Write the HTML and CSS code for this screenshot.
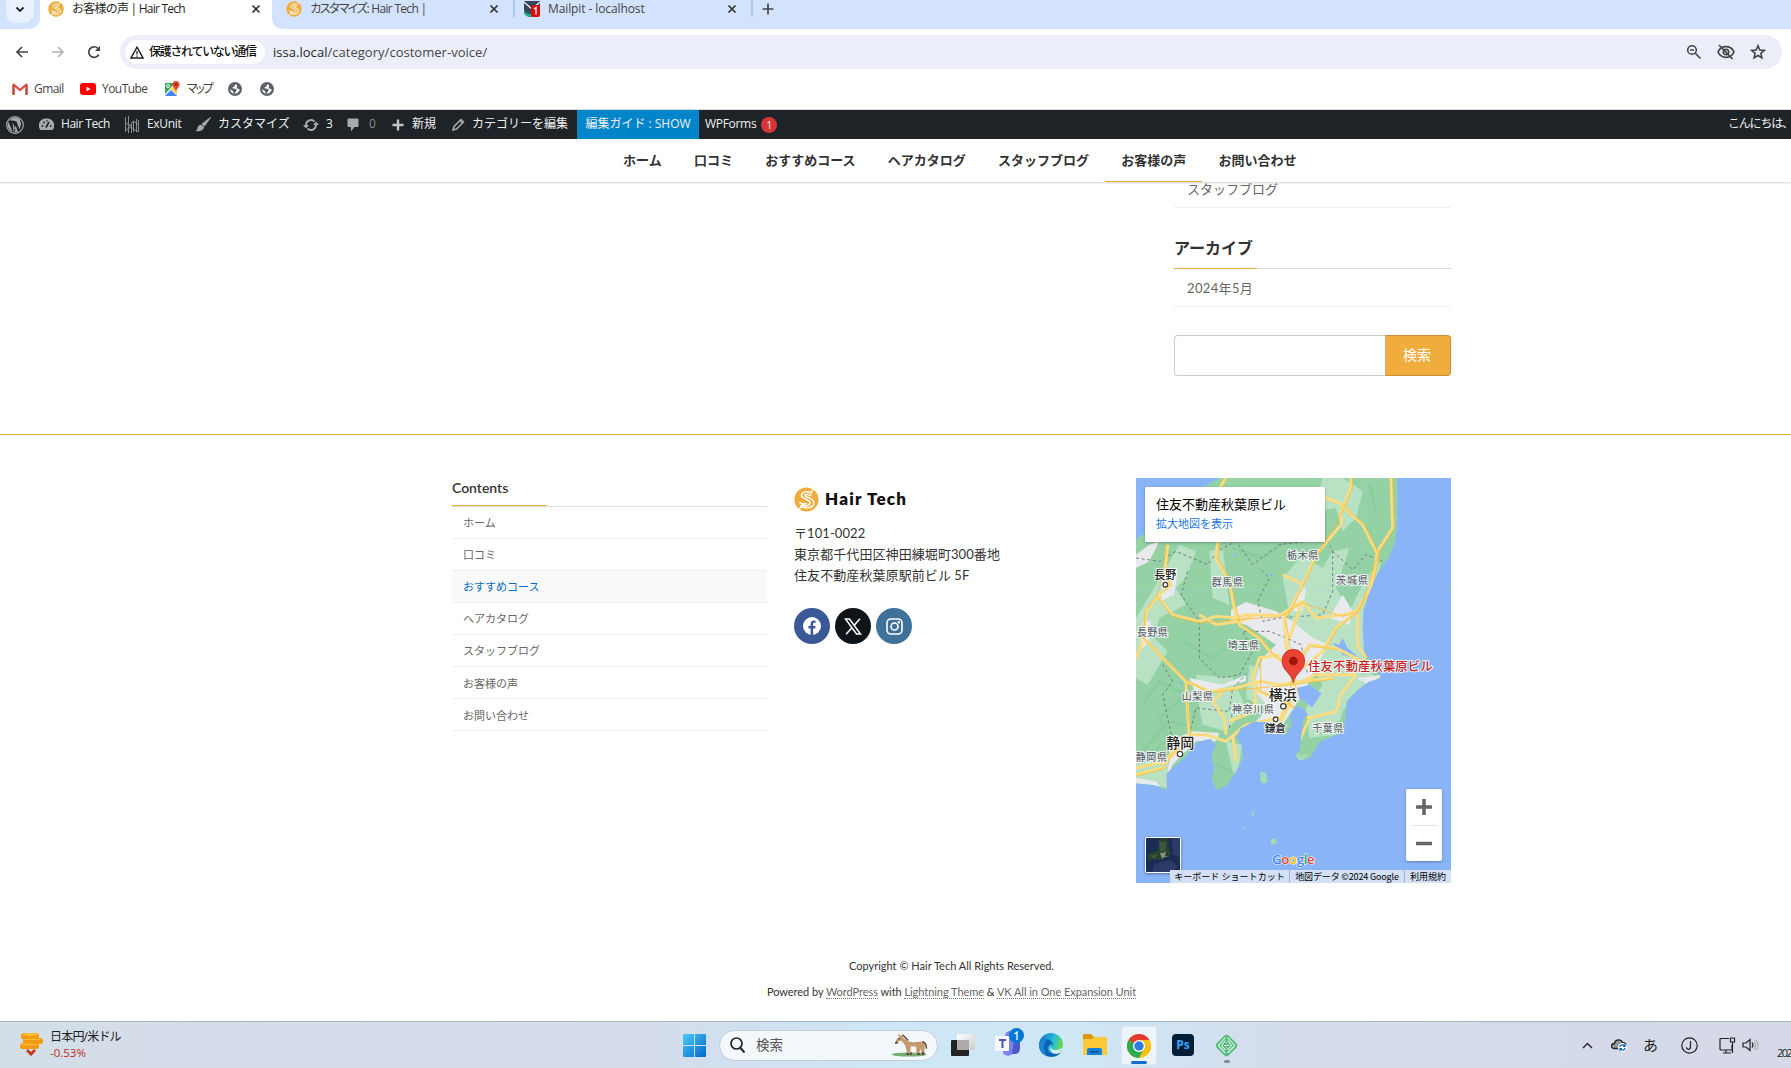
FILE: index.html
```html
<!DOCTYPE html>
<html lang="ja">
<head>
<meta charset="utf-8">
<title>お客様の声 | Hair Tech</title>
<link rel="stylesheet" href="styles.css">
</head>
<body>
<svg width="0" height="0" class="defs" aria-hidden="true">
  <defs>
    <symbol id="brand" viewBox="0 0 26 26"><circle cx="13" cy="13" r="12.6" fill="#f0ad3d"/><path d="M20.5 1.5 17.7 6.2C14 3.7 7.5 4.8 7.8 9.2c.3 3 9 3.700 9 7.300 0 3.200-5 4-8.500 1.500L5 24.500M18 9.500c-1.500-2-6.500-2.200-6.600-.5-.1 1.800 9.200 2.200 9.200 7.400 0 5.500-8 6.500-12.600 3.800M5.500 15.500c1.500 2.300 7 3 7.200 1" fill="none" stroke="#fff" stroke-width="1.5"/></symbol>
    <symbol id="close" viewBox="0 0 10 10"><path d="M1.500 1.500l7 7m0-7l-7 7" stroke="#333" stroke-width="1.700"/></symbol>
    <symbol id="globe" viewBox="0 0 16 16"><circle cx="8" cy="8" r="8" fill="#5f6368"/><path d="M9 2.500c-2 1-.5 2.300-2.500 3C5 6 4.500 7 6 7.500c2 .3 3.500.2 4 1.500.3 1.300-1.800 2-2.300 4.500C11 13 13.500 10.500 13.500 8c-1 1-2-.3-3-1S11.500 4 9 2.500zM2.300 8.500C3 11 4.500 12.500 6.300 13.300 6.500 11 5.500 9.500 2.300 8.500z" fill="#fff"/></symbol>
  </defs>
</svg>

<header class="browser">
  <div class="tabs">
    <div class="tab-search"><svg width="10" height="7" viewBox="0 0 10 7"><path d="M1.500 1.500 5 5l3.500-3.500" fill="none" stroke="#222" stroke-width="1.800"/></svg></div>
    <div class="tab active"><svg class="fav"><use href="#brand"/></svg><span class="t1">お客様の声 | Hair Tech</span><svg class="x"><use href="#close"/></svg></div>
    <div class="tab second"><svg class="fav"><use href="#brand"/></svg><span class="t2"><span class="kana">カスタマイズ</span>: Hair Tech |</span><svg class="x"><use href="#close"/></svg></div>
    <i class="sep"></i>
    <div class="tab third"><svg class="fav" viewBox="0 0 16 16"><path d="M0 0h16v10c0 4-3 6-8 6s-8-2-8-6z" fill="#33475f"/><path d="M0 1l8 7 8-7" fill="none" stroke="#dfe6ee" stroke-width="1.400"/><path d="M0 8c1 4 3 5 8 5v3C3 16 0 14 0 8z" fill="#12b98b"/><rect x="7" y="4" width="9" height="12" rx="2" fill="#e00707"/><path d="M10 8l2-1.500v7" fill="none" stroke="#fff" stroke-width="1.400"/></svg><span class="t3">Mailpit - localhost</span><svg class="x"><use href="#close"/></svg></div>
    <i class="sep"></i>
    <svg class="plus" viewBox="0 0 12 12"><path d="M6 .5v11M.5 6h11" stroke="#444" stroke-width="1.700"/></svg>
  </div>
  <div class="toolbar">
    <div class="nav-icons">
      <svg width="14" height="12" viewBox="0 0 14 12"><path d="M7 1 2 6l5 5M2 6h11" fill="none" stroke="#444" stroke-width="1.700"/></svg>
      <svg width="14" height="12" viewBox="0 0 14 12"><path d="M7 1l5 5-5 5M12 6H1" fill="none" stroke="#b0b0b0" stroke-width="1.500"/></svg>
      <svg width="14" height="14" viewBox="0 0 14 14"><path d="M11.800 9.500A5.300 5.300 0 1 1 11 3.500L12.500 5" fill="none" stroke="#444" stroke-width="1.700"/><path d="M13 .8V6H8z" fill="#444"/></svg>
    </div>
    <div class="omnibox">
      <div class="chip"><svg width="14" height="13" viewBox="0 0 14 13"><path d="M7 1.200 13 12H1z" fill="none" stroke="#222" stroke-width="1.400"/><path d="M7 5v3.500M7 9.500v1.300" stroke="#222" stroke-width="1.300"/></svg><span>保護されていない通信</span></div>
      <div class="url"><b>issa.local</b>/category/costomer-voice/</div>
      <div class="omni-icons">
        <svg width="16" height="16" viewBox="0 0 16 16" fill="none" stroke="#444" stroke-width="1.600"><circle cx="6" cy="6" r="4.300"/><path d="M9.300 9.300l5.200 5.200M4 6h4"/></svg>
        <svg width="18" height="16" viewBox="0 0 18 16" fill="none" stroke="#444" stroke-width="1.700"><path d="M1 8c1.500-3.500 4.500-5.300 8-5.300S15.500 4.500 17 8c-1.500 3.500-4.500 5.300-8 5.300S2.500 11.500 1 8zM2 1l13.500 14"/><circle cx="9" cy="8" r="2.700"/></svg>
        <svg width="16" height="16" viewBox="0 0 16 16" fill="none" stroke="#444" stroke-width="1.600"><path d="M8 1.800 9.800 6l4.500.4-3.400 3 1 4.400L8 11.500l-3.900 2.300 1-4.400-3.400-3L6.200 6z"/></svg>
      </div>
    </div>
  </div>
  <div class="bookmarks">
    <div><svg width="16" height="12" viewBox="0 0 16 12"><path d="M1.500 12V2" stroke="#c5463a" stroke-width="2.500"/><path d="M14.500 12V2" stroke="#c5463a" stroke-width="2.500"/><path d="M1 1l7 6 7-6" fill="none" stroke="#e0483b" stroke-width="2.300"/></svg><span class="b1">Gmail</span></div>
    <div><svg width="16" height="12" viewBox="0 0 16 12"><rect width="16" height="12" rx="3" fill="#f00"/><path d="M6.500 3.500v5l4-2.500z" fill="#fff"/></svg><span class="b2">YouTube</span></div>
    <div><svg width="16" height="16" viewBox="0 0 16 16"><path d="M1 2h12v13H1z" fill="#e8eaed"/><path d="M1 2h10L1 13z" fill="#34a853"/><path d="M1 15 7 9l6 6z" fill="#4285f4"/><path d="M9 6l4-2v10L7 8z" fill="#fbd24b"/><path d="M12 0a3.500 3.500 0 0 0-3.500 3.500C8.500 6 11 7 12 10.500 13 7 15.500 6 15.500 3.500A3.500 3.500 0 0 0 12 0z" fill="#ea4335"/><circle cx="12" cy="3.500" r="1.200" fill="#811f18"/><circle cx="4" cy="5" r="1.500" fill="none" stroke="#fff"/></svg><span class="b3">マップ</span></div>
    <div><svg width="14" height="14"><use href="#globe"/></svg></div>
    <div><svg width="14" height="14"><use href="#globe"/></svg></div>
  </div>
</header>

<nav class="admin">
  <div><svg width="18" height="18" viewBox="0 0 18 18"><circle cx="9" cy="9" r="8.300" fill="none" stroke="#a7aaad" stroke-width="1.200"/><path d="M2.500 5.800 6.600 16a7.500 7.500 0 0 1-4.100-10.200zM6.500 5.500l3 8.500-1.900 3M10.500 5.500l3 8 1.500-5c.5-2-1.500-3-.8-5A7.300 7.300 0 0 0 3.200 4.500H7M9.700 9.500 7.500 16.300l4.500 0z" fill="#a7aaad"/></svg></div>
  <div><svg width="15" height="13" viewBox="0 0 15 13"><path d="M7.500.5a7 7 0 0 0-6 11.500h12a7 7 0 0 0-6-11.500z" fill="#a7aaad"/><path d="M7 9.500 10 4" stroke="#1d2327" stroke-width="1.600"/><g fill="#1d2327"><circle cx="3.500" cy="8" r=".9"/><circle cx="5" cy="4.500" r=".9"/><circle cx="8" cy="3" r=".8"/><circle cx="11.700" cy="8" r=".9"/></g></svg><span class="a1">Hair Tech</span></div>
  <div><svg width="16" height="17" viewBox="0 0 16 17" fill="none" stroke="#8a8e92"><path d="M1.500 1v15M4.500 0v17M7.500 7v10M9.500 5v11M12.500 3v13M14.500 4v12M1 6l5 4 3-5 6 4M2 14l5-3 7 5"/></svg><span class="a2">ExUnit</span></div>
  <div><svg width="16" height="15" viewBox="0 0 16 15"><path d="M15.500.5 9.500 9 7 7z" fill="#a7aaad" stroke="#a7aaad"/><path d="M6.300 7.700 9 10c0 3-4 5-8.500 4 2-1 1.500-2 2.300-4 .7-1.700 2-2.300 3.500-2.300z" fill="#a7aaad"/></svg><span class="a3">カスタマイズ</span></div>
  <div><svg width="16" height="14" viewBox="0 0 16 14"><path d="M3 7a5 5 0 0 1 8.500-3.500M13 7a5 5 0 0 1-8.500 3.500" fill="none" stroke="#a7aaad" stroke-width="1.900"/><path d="M0 7h6L3 10.500zM10 7h6l-3-3.500z" fill="#a7aaad"/></svg><span class="a4">3</span></div>
  <div class="dim"><svg width="12" height="14" viewBox="0 0 12 14"><path d="M1.500.5h9a1 1 0 0 1 1 1V8a1 1 0 0 1-1 1H7.500L4 13.500V9H1.500a1 1 0 0 1-1-1V1.500a1 1 0 0 1 1-1z" fill="#a7aaad"/></svg><span class="a5">0</span></div>
  <div class="new"><svg width="12" height="12" viewBox="0 0 12 12"><path d="M6 .5v11M.5 6h11" stroke="#c3c4c7" stroke-width="2.400"/></svg><span class="a6">新規</span></div>
  <div><svg width="13" height="13" viewBox="0 0 13 13"><path d="M1 12 2 8.500 9 1.500l2.500 2.500-7 7z" fill="none" stroke="#a7aaad" stroke-width="1.500"/><path d="M8 2.500l2.500 2.500" stroke="#a7aaad" stroke-width="1.500"/></svg><span class="a7">カテゴリーを編集</span></div>
  <div class="guide"><span class="a8">編集ガイド : SHOW</span></div>
  <div class="forms"><span class="a9">WPForms</span><em>1</em></div>
  <div class="hello">こんにちは、</div>
</nav>

<main class="page">
  <nav class="site-nav">
    <a>ホーム</a><a>口コミ</a><a>おすすめコース</a><a>ヘアカタログ</a><a>スタッフブログ</a><a class="current">お客様の声</a><a>お問い合わせ</a>
  </nav>
  <div class="content">
    <aside class="sidebar">
      <div class="side-item first">スタッフブログ</div>
      <h2><span>アーカイブ</span></h2>
      <div class="side-item second-item">2024年5月</div>
      <div class="search-form"><div class="search-input"></div><button>検索</button></div>
    </aside>
  </div>
  <footer class="footer">
    <div class="columns">
      <section class="contents">
        <h3>Contents</h3>
        <ul><li>ホーム</li><li>口コミ</li><li class="hover">おすすめコース</li><li>ヘアカタログ</li><li>スタッフブログ</li><li class="low">お客様の声</li><li class="low">お問い合わせ</li></ul>
      </section>
      <section class="company">
        <div class="logo"><svg width="25" height="25"><use href="#brand"/></svg><span>Hair Tech</span></div>
        <p>〒101-0022<br>東京都千代田区神田練堀町300番地<br>住友不動産秋葉原駅前ビル 5F</p>
        <div class="social">
          <i class="fb"><svg width="18" height="18" viewBox="0 0 18 18"><circle cx="9" cy="9" r="9" fill="#fff"/><path d="M7.600 18v-6.500H5.400V9h2.200V7.200c0-2.500 1.400-3.600 3.300-3.600.8 0 1.500.1 1.700.1v2h-1.200c-1 0-1.300.6-1.300 1.300V9h2.500l-.4 2.500h-2.100V18z" fill="#3b5998"/></svg></i>
          <i class="tw"><svg width="18" height="17" viewBox="0 0 18 17"><path d="M1.500 1h4L16.500 16h-4zM16 .8 10 7.600M8 9.700 2 16.200" fill="none" stroke="#fff" stroke-width="1.500"/></svg></i>
          <i class="ig"><svg width="17" height="17" viewBox="0 0 17 17" fill="none" stroke="#fff" stroke-width="1.600"><rect x="1" y="1" width="15" height="15" rx="4"/><circle cx="8.500" cy="8.500" r="3.500"/><circle cx="12.800" cy="4.200" r=".5"/></svg></i>
        </div>
      </section>
      <section class="map">
        <svg class="terrain" viewBox="0 0 945 1215">
          <defs>
            <clipPath id="land"><path d="M0 186 25 165 60 95 150 60 215 20 250 0H785V120L778 190 758 240 722 290 697 350 682 400 680 450 684 520 712 560 737 601 700 610 665 635 632 670 627 726 622 761 552 791 520 842 488 844 477 830 492 816 497 766 500 726 517 711 500 690 478 684 462 715 467 740 450 770 432 750 410 732 352 731 312 752 302 780 318 805 322 840 298 885 270 925 242 935 227 905 235 870 225 835 240 800 222 782 185 792 150 835 92 885 92 937 55 921 0 916z"/></clipPath>
          </defs>
          <path fill="#8ab4f8" d="M0 0h945v1215H0z"/>
          <g clip-path="url(#land)">
            <path fill="#94d2a5" d="M0 0h945v1215H0z"/>
            <g fill="#b9e2c5">
              <path d="M130 200 180 220 150 300 120 330 150 380 70 420 55 480 95 520 35 620 0 600V420L60 320z"/>
              <path d="M530 100 600 90 620 160 660 120 680 40 620 0H560zM500 230 560 270 590 220 640 210 600 330 640 400 690 300 735 250 700 400 684 560 720 600 620 700 600 770 520 780 510 690 560 620 470 460 440 300z"/>
              <path d="M220 220 260 210 280 380 230 360zM180 590 290 600 330 690 270 760 200 740 190 690zM340 560 430 590 400 700 330 660z"/>
              <path d="M0 850 90 840 110 880 92 930 0 910zM270 790 318 800 305 890 290 880z"/>
              <path d="M350 60 430 30 420 100 370 150z"/>
            </g>
            <g fill="#e8eaed">
              <path d="M285 395 330 372 420 400 470 430 530 480 580 500 555 540 530 590 505 640 460 710 440 740 360 730 400 690 350 630 380 540 420 500 330 440 285 430zM490 330 510 330 500 400 470 400zM580 420 620 350 650 400 640 440z"/>
              <path d="M80 270 125 280 115 350 75 370zM20 430 45 430 40 490 10 520zM160 600 260 620 330 590 330 610 180 650zM100 790 170 760 250 765 240 790 180 790 110 860 92 900 100 850zM0 900 60 910 70 925 0 920z"/>
              <path d="M40 200l30-10-30 60-40 20v-40zM660 600 740 590 700 620z"/>
            </g>
            <g stroke="#78c38e" stroke-width="9" fill="none" opacity=".32"><path d="M20 680l50-70 80 40-80 70 30 60-80 70M310 110l70 70 80-60M140 490l90 50 70-50M290 210l90 30 60-40M20 820l80-90 50 10M700 20l20 80M240 860l50 20M550 770l60-40"/></g>
            <g fill="#8ab4f8"><path d="M482 630 520 621 557 646 528 688 510 675 490 660zM590 495 610 500 620 480 635 510 675 545 620 530zM395 292l10-5 5 8zM290 230l10-5v12zM128 610l10 2-3 8z"/></g>
            <g fill="none" stroke="#757a80" stroke-width="3" stroke-dasharray="9 8">
              <path d="M0 240 70 250 120 220 215 260 245 220 300 190 350 260 430 200 510 190 570 180 590 220 590 340 560 410 430 420 380 430 365 370 400 300 370 270M155 280 135 350 190 430 190 540 250 600 310 590 350 520 320 460 400 460 450 480 495 500 515 590"/>
              <path d="M80 560 110 610 80 650 110 790M160 770 180 690 280 700 290 630 340 580M280 750 290 700M590 220 650 275 690 230 740 250"/>
            </g>
            <g fill="none" stroke="#fbdc80" stroke-width="9" stroke-linejoin="round">
              <path d="M95 200 85 290 105 320 65 355 30 400 22 480 80 540 150 610 155 700 160 770M65 355 110 410 190 430 240 415 300 420 330 410 430 412 500 370 540 420 620 410 660 400 705 330 725 230 680 140 610 75 570 60 520 50M240 440 190 410M240 440 310 430 360 410"/>
              <path d="M270 0 235 60 250 150 240 240 280 310 295 390 310 440 370 480 410 530 470 570 520 500 600 510 680 550M645 0 645 30 615 100 615 140 540 230 510 300 470 380 445 420 450 500 470 570M765 0 770 150 725 220 705 330 665 400 600 450 560 520 500 570M665 410 665 500 690 540M20 490 0 540"/>
              <path d="M430 530 370 540 350 600 370 640 460 680 520 720 600 700 615 650 660 590M150 610 220 640 300 630 370 610 430 620 500 610 590 600M500 610 540 590 660 590M470 570 480 640 430 740M520 720 490 790M160 770 210 770 270 790 330 740 430 720 460 680M160 770 110 820 80 870 0 890M0 870 90 850 150 790M270 770 265 720 230 670 260 640M360 620 355 700 280 730M290 770 300 850M440 290 500 320M500 370 460 480"/>
            </g>
            <g fill="none" stroke="#f5bd3b" stroke-width="2.500" stroke-linejoin="round">
              <path d="M90 200 80 290 60 355 27 400 22 480 85 545 155 610 155 700 165 775 110 825 80 874 0 895M65 360 110 415 190 435 300 425 430 417 500 375 620 415 660 405 710 330 730 230 685 140 615 78"/>
              <path d="M274 0 240 60 255 150 245 240 285 310 300 390 314 440 374 480 414 530 474 570 524 505 604 515M649 0 649 30 620 100 545 230 474 380 449 420 470 570 460 680 520 725M770 0 775 150 730 220 670 400 605 450 564 520M374 540 374 640 464 680M160 610 220 645 300 635 430 625 590 604"/>
            </g>
          </g>
          <g fill="#a8dab5"><path d="M374 881l16 4 4 28-12 4-10-8zM348 1000l5-3-1 20-4-4zM320 1048h6l-2 10zM404 1086l14-6 5 14-16 8zM436 758l10 6-8 10zM477 830l40 0-14 16-15 0z"/></g>
          <path d="M0 337h945M682 0v1215M0 1027h945" stroke="#a3c2f6" stroke-width="2" opacity=".35"/>
          <g class="place prefecture">
            <text x="453" y="243" textLength="94">栃木県</text><text x="227" y="325" textLength="94">群馬県</text><text x="600" y="319" textLength="96">茨城県</text>
            <text x="3" y="475" textLength="92">長野県</text><text x="275" y="514" textLength="94">埼玉県</text><text x="137" y="667" textLength="94">山梨県</text>
            <text x="288" y="705" textLength="126">神奈川県</text><text x="529" y="762" textLength="93">千葉県</text><text x="-1" y="849" textLength="94">静岡県</text>
          </g>
          <g class="place city">
            <text x="55" y="304" font-size="33">長野</text><text x="398" y="666" font-size="42">横浜</text><text x="386" y="763" font-size="32">鎌倉</text><text x="91" y="809" font-size="42">静岡</text>
          </g>
          <g fill="#fff" stroke="#444" stroke-width="4"><circle cx="88" cy="320" r="7"/><circle cx="442" cy="685" r="8"/><circle cx="419" cy="724" r="7"/><circle cx="132" cy="828" r="8"/></g>
          <path d="M472 615c-5-31-34-36-34-67a34 34 0 0 1 68 0c0 31-29 36-34 67z" fill="#ea4335" stroke="#b8261b" stroke-width="2"/><circle cx="472" cy="549" r="13" fill="#9c150d"/>
          <text class="pin-label" x="516" y="578" textLength="374">住友不動産秋葉原ビル</text>
          <text class="google" x="408" y="1158" textLength="128"><tspan fill="#4285f4">G</tspan><tspan fill="#ea4335">o</tspan><tspan fill="#fbbc04">o</tspan><tspan fill="#4285f4">g</tspan><tspan fill="#34a853">l</tspan><tspan fill="#ea4335">e</tspan></text>
        </svg>
        <div class="map-card"><strong>住友不動産秋葉原ビル</strong><a>拡大地図を表示</a></div>
        <svg class="satellite" viewBox="0 0 34 34"><path fill="#1b2c54" d="M0 0h34v34H0z"/><path fill="#2a3b66" d="M26 0h8v20l-7-4zM8 26l16-4 8 6-5 6H6z"/><path fill="#26412f" d="M2 16 12 12 13 0h10l-1 9 3 7-9 6-9-1-5 3z"/><path fill="#3a573e" d="M13 4h7v7l-6 5zM4 18l8-2-3 5z"/><path fill="#8c9178" d="m14 15 3 0 3-2-1 5 4 1-5 0-2 2z"/></svg>
        <div class="zoom"><svg width="36" height="72" viewBox="0 0 36 72"><path d="M10 18h16M18 10v16M10 54.500h16" stroke="#666" stroke-width="3.600"/><path d="M5 36.500h27" stroke="#e6e6e6"/></svg></div>
        <div class="map-legal"><span class="l1">キーボード ショートカット</span><span class="l2">地図データ ©2024 Google</span><span class="l3">利用規約</span></div>
      </section>
    </div>
    <div class="copyright"><p class="c1">Copyright © Hair Tech All Rights Reserved.</p><p class="c2">Powered by <a>WordPress</a> with <a>Lightning Theme</a> &amp; <a>VK All in One Expansion Unit</a></p></div>
  </footer>
</main>

<footer class="taskbar">
  <div class="widget">
    <svg width="23" height="24" viewBox="0 0 23 24"><g fill="#f59a13"><rect x="1" y="1" width="18" height="6" rx="2.500"/><rect x="3" y="6" width="20" height="6" rx="2.500"/><rect x="0" y="11" width="19" height="6" rx="2.500"/></g><g fill="#ffc13c"><ellipse cx="10" cy="2.500" rx="8.500" ry="1.500"/><path d="M5 7h15v1H5zM1.500 12h15v1h-15z"/></g><path d="M7 18l4 4 4-4" fill="none" stroke="#c43e1c" stroke-width="3"/></svg>
    <div><span class="w1">日本円/米ドル</span><span class="w2">-0.53%</span></div>
  </div>
  <div class="apps">
    <svg class="start" viewBox="0 0 23 23"><defs><linearGradient id="win" x2="1" y2="1"><stop stop-color="#4cc9fa"/><stop offset="1" stop-color="#0069cc"/></linearGradient></defs><path d="M1 0h10v11H0V1a1 1 0 0 1 1-1zM12 0h10a1 1 0 0 1 1 1v10H12zM0 12h11v11H1a1 1 0 0 1-1-1zM12 12h11v10a1 1 0 0 1-1 1H12z" fill="url(#win)"/></svg>
    <div class="task-search">
      <svg width="15" height="16" viewBox="0 0 15 16"><circle cx="6.500" cy="6.500" r="5.500" fill="none" stroke="#222" stroke-width="1.700"/><path d="M10.500 11l4 4.500" stroke="#222" stroke-width="2"/></svg><span>検索</span>
      <svg class="donkey" width="36" height="26" viewBox="0 0 40 26"><ellipse cx="19" cy="23.500" rx="19" ry="2.300" fill="#76ad70"/><path d="M5 7 8 4 6 0l4 3L12 0l0 5 6 4 6 1 9-1c4 0 4 5 3 8l0 6h-3l-1-6-2 6h-3l0-8-6-.5-1 8.500h-3l-2-9-3-4-2-2-5 2-1-2z" fill="#c29a6c"/><path d="M12 2l6 6M34 9q5 3 4 8" fill="none" stroke="#6d4c41" stroke-width="1.800"/><path d="M16 22h3v2h-3zM20 21h2v3h-2zM28 22h3v2h-3zM33 21h3v3h-3z" fill="#594a42"/><path d="M3 10l3-1 1 2-3 1z" fill="#54443b"/><circle cx="8" cy="6" r=".8" fill="#222"/></svg>
    </div>
    <svg class="taskview" viewBox="0 0 24 24"><defs><linearGradient id="tv" x2="1" y2="1"><stop stop-color="#fff"/><stop offset="1" stop-color="#ccc"/></linearGradient></defs><rect y="7" width="18" height="16" rx="1" fill="#222"/><rect x="6" y="1" width="18" height="16" rx="1" fill="url(#tv)"/><path d="M6 7h12v10H6z" fill="#aaa"/></svg>
    <svg class="teams" viewBox="0 0 30 28"><circle cx="15" cy="8" r="5" fill="#7b83eb"/><path d="M8 12h11v10a6 6 0 0 1-11 3z" fill="#7b83eb"/><path d="M19 12h6v8c0 4-2 6-5 6h-3z" fill="#5059c9"/><rect y="8" width="14" height="15" rx="1" fill="#f7f8ff"/><path d="M4 12h7M7.500 12v8" stroke="#4b53bc" stroke-width="2"/><circle cx="21.500" cy="7.500" r="7.500" fill="#0078d4"/><path d="M19.500 6l2.500-2v8" fill="none" stroke="#fff" stroke-width="1.300"/></svg>
    <svg class="edge" viewBox="0 0 24 24"><defs><linearGradient id="ed" x2="1" y2=".3"><stop offset=".2" stop-color="#1683d0"/><stop offset=".65" stop-color="#27bdd5"/><stop offset="1" stop-color="#68d852"/></linearGradient></defs><circle cx="12" cy="12" r="12" fill="url(#ed)"/><path d="M0 11c2-6 13-6 14 1-5-2-8 5-2 8 3 1.500 7 1 10-1-5 8-21 6-22-8z" fill="#0b62b5"/><path d="M0 11c1-3 5-5 8-4-4 2-4 10 0 16C3 21.500 0 18 0 11z" fill="#1a87d3"/><path d="M12.500 10c-3 2-1 7 3.500 7 3 0 6-1 8-3-1 3-2 4.500-3.500 6-6 3-12.500-3-8-10z" fill="#d2e9f6"/></svg>
    <svg class="files" viewBox="0 0 24 22"><path d="M1 0h7l3 3h12a1 1 0 0 1 1 1v8H0V1z" fill="#dc960b"/><path d="M0 5h9l2-2h12a1 1 0 0 1 1 1v17H0z" fill="#ffca3a"/><path d="M4 21v-5a2 2 0 0 1 2-2h11a2 2 0 0 1 2 2v5z" fill="#1580d4"/><path d="M7 17h9v1.500H7z" fill="#07549c"/></svg>
    <div class="chrome-tile"><svg width="24" height="24" viewBox="0 0 24 24"><circle cx="12" cy="12" r="12" fill="#fbc116"/><path d="M12 12 1.600 6A12 12 0 0 1 22.400 6z" fill="#e33b2e"/><path d="M1.600 6A12 12 0 0 0 12 24l5-9-5-3z" fill="#2da94f"/><path d="M12 6h10.400a12 12 0 0 1 0 12L12 24l5-9z" fill="#fbc116"/><circle cx="12" cy="12" r="6" fill="#fff"/><circle cx="12" cy="12" r="4.700" fill="#3478e5"/></svg><i></i></div>
    <div class="ps">Ps</div>
    <div class="localwp"><svg width="25" height="25" viewBox="0 0 25 25"><rect x="4" y="4" width="17" height="17" rx="3.500" transform="rotate(45 12.500 12.500)" fill="#51bb7b"/><g fill="none" stroke="#e6f6ec" stroke-width="1.100"><path d="M11.500 4.500 5 11.500q-1 1 0 2l6.500 6.500M13.500 4.500 20 11.500q1 1 0 2L13.500 20M11.500 7.500 7.500 12.500l4 4.500M13.500 7.500l4 5-4 4.500M10 12.500h5M12.500 9.500v1M12.500 14.500v1"/></g></svg><i></i></div>
  </div>
  <div class="tray">
    <svg width="11" height="7" viewBox="0 0 11 7"><path d="M1 6l4.500-4.500L10 6" fill="none" stroke="#222" stroke-width="1.400"/></svg>
    <svg width="16" height="14" viewBox="0 0 16 14"><path d="M3.500 10.500c-4 0-4-5 0-5C4 1 10 .5 11.500 4.500c4 0 4.500 5 1 6z" fill="#999" stroke="#222" stroke-width="1.300"/><circle cx="11.500" cy="9.500" r="4.500" fill="#fff"/><path d="M8.800 9a2.800 2.800 0 0 1 5-1M14.200 10a2.800 2.800 0 0 1-5 1M14 6v2.300h-2M9 13v-2.300h2" fill="none" stroke="#0f63b5" stroke-width="1.200"/></svg>
    <span class="ime">あ</span>
    <svg width="17" height="17" viewBox="0 0 17 17" fill="none" stroke="#222" stroke-width="1.200"><circle cx="8.500" cy="8.500" r="7.700"/><path d="M9.500 4v6c0 3-4 3-4 .3"/></svg>
    <svg width="17" height="17" viewBox="0 0 17 17" fill="none" stroke="#222" stroke-width="1.200"><path d="M10 1.500H2a1 1 0 0 0-1 1V12a1 1 0 0 0 1 1h11V8M7 13v2.500M4 16h8M11.500 1h4v4h-4zM13.500 5v11"/></svg>
    <svg width="17" height="14" viewBox="0 0 17 14" fill="none" stroke="#222" stroke-width="1.200"><path d="M1 5h3l4-3.500v11L4 9H1z"/><path d="M10 4.500q2 2.500 0 5"/><path d="M12 3q3 4 0 8M14 1.500q4 5.500 0 11" stroke="#aaa"/></svg>
    <span class="date">202</span>
  </div>
</footer>
</body>
</html>
```
FILE: styles.css
```css
* { box-sizing: border-box; }
html, body { margin: 0; width: 1791px; height: 1068px; overflow: hidden; }
body { display: flex; flex-direction: column; background: #fff; color: #333; font: 13px/1.2 Lato, "Noto Sans CJK JP", sans-serif; white-space: nowrap; }
svg { display: block; flex: none; }
.defs { position: absolute; }
p, h2, h3, ul { margin: 0; padding: 0; }
li { list-style: none; }
i, em { font-style: normal; }

/* browser chrome */
.browser { height: 110px; flex: none; border-bottom: 1px solid #d5d8df; font-family: "Open Sans", "Noto Sans CJK JP", sans-serif; font-size: 12px; }
.tabs { height: 29px; background: #d3e3fd; display: flex; align-items: flex-start; }
.tab-search { width: 28px; height: 23px; margin: 0 6px; background: #e9f1ff; border-radius: 0 0 9px 9px; display: flex; justify-content: center; padding-top: 6px; }
.tab { height: 29px; display: flex; align-items: center; padding-bottom: 11px; }
.tab > span { flex: 1; margin-left: 8px; }
.active { width: 232px; background: #fff; padding-left: 8px; padding-right: 11px; position: relative; color: #1f1f1f; }
.active::before, .active::after { content: ""; position: absolute; bottom: 0; width: 10px; height: 10px; }
.active::before { left: -10px; background: radial-gradient(circle at 0 0, #d3e3fd 9.500px, #fff 10px); }
.active::after { right: -10px; background: radial-gradient(circle at 100% 0, #d3e3fd 9.500px, #fff 10px); }
.second { width: 240px; padding: 0 13px 11px 14px; color: #444; }
.third { width: 235px; padding: 0 13px 11px 9px; color: #444; }
.fav { width: 16px; height: 16px; }
.x { width: 10px; height: 10px; }
.sep { width: 2px; height: 17px; background: #a8c7fa; margin-left: 1px; }
.plus { width: 12px; height: 12px; margin: 3px 0 0 9px; }
.t1 { letter-spacing: -.76px; }
.t2 { letter-spacing: -.7px; }
.kana { letter-spacing: -2.700px; margin-right: 1px; }
.t3 { letter-spacing: -.1px; }
.toolbar { height: 46px; display: flex; align-items: center; padding-left: 15px; }
.nav-icons { width: 105px; display: flex; gap: 22px; align-items: center; }
.omnibox { width: 1662px; height: 34px; border-radius: 17px; background: #ebeef8; display: flex; align-items: center; padding: 0 16px 0 5px; }
.chip { width: 140px; height: 24px; border-radius: 12px; background: #fff; display: flex; align-items: center; gap: 5px; padding-left: 5px; color: #111; font-weight: 500; letter-spacing: -1.300px; }
.url { margin-left: 8px; flex: 1; font-size: 13px; padding-top: 2px; color: #474747; letter-spacing: .03px; }
.url b { font-weight: 400; color: #1f1f1f; }
.omni-icons { display: flex; gap: 15px; }
.bookmarks { height: 28px; display: grid; grid-template-columns: 68px 84px 64px 32px 32px; padding: 0 0 0 12px; color: #444; }
.bookmarks div { display: flex; align-items: center; gap: 6px; }
.b1, .b2 { letter-spacing: -.55px; }
.b3 { letter-spacing: -4px; }

/* admin bar */
.admin { height: 29px; flex: none; background: #1d2327; color: #f0f0f1; display: grid; grid-template-columns: 33px 85px 71px 108px 44px 45px 60px 125px 122px 100px 1fr; padding-left: 6px; font-family: "Open Sans", "Noto Sans CJK JP", sans-serif; font-size: 12px; }
.admin > div { display: flex; align-items: center; gap: 7px; min-width: 0; }
.dim { color: #8a8e92; }
.admin > .dim { gap: 10px; }
.admin > .new { gap: 8px; }
.a1 { letter-spacing: -.45px; }
.a2, .a9 { letter-spacing: -.3px; }
.admin .guide { background: #0085ca; justify-content: center; }
.admin .forms { padding-left: 6px; gap: 5px; }
.forms em { width: 16px; height: 16px; border-radius: 8px; background: #d63638; font-size: 10px; line-height: 16px; text-align: center; }
.admin > .hello { padding-left: 929px; letter-spacing: -1.200px; }

/* site */
.page { width: 1791px; height: 882px; flex: none; }
.site-nav { height: 43px; display: flex; padding-left: 607px; box-shadow: 0 1px 2px rgba(0,0,0,.18); position: relative; background: #fff; font: bold 13px/41px "Noto Sans CJK JP", sans-serif; color: #333; }
.site-nav a { padding: 0 16.120px; }
.site-nav .current { border-bottom: 1px solid #f0ad3d; }
.content { height: 252px; padding-left: 1174px; }
.sidebar { width: 277px; }
.side-item { border-bottom: 1px solid #eee; padding-left: 13px; color: #666; }
.first { height: 26px; line-height: 15px; }
.sidebar h2 { margin-top: 28px; height: 33px; border-bottom: 1px solid #ddd; font-size: 16px; line-height: 24px; color: #333; }
.sidebar h2 span { display: block; width: 83px; height: 33px; border-bottom: 1px solid #f0ad3d; }
.second-item { height: 38px; line-height: 38px; letter-spacing: .35px; }
.search-form { margin-top: 28px; display: flex; height: 41px; }
.search-input { width: 211px; border: 1px solid #ccc; border-right: 0; border-radius: 4px 0 0 4px; }
.search-form button { width: 66px; padding: 0 2px 3px 0; margin: 0; background: #f0ad3d; border: 1px solid #c58f35; border-left-color: #d0b07a; border-radius: 0 4px 4px 0; color: #fff; font: 14px "Noto Sans CJK JP", sans-serif; }
.footer { border-top: 1px solid #f0ad3d; padding-top: 43px; }
.columns { display: grid; grid-template-columns: 342px 342px 315px; margin-left: 452px; }
.contents { width: 315px; }
.contents h3 { height: 29px; border-bottom: 1px solid #ddd; font-size: 14px; line-height: 20px; font-weight: 600; letter-spacing: -.02px; }
.contents h3::after { content: ""; display: block; width: 95px; height: 1px; margin-top: 7px; background: #f0ad3d; }
.contents li { height: 32px; border-bottom: 1px solid #eee; padding-left: 11px; font-size: 11px; line-height: 31px; color: #666; }
.contents .hover { background: #f9f9f9; color: #0a6cc4; }
.contents .low { line-height: 33px; }
.company { padding-top: 9px; }
.logo { display: flex; align-items: center; gap: 6px; height: 25px; color: #111; font: 800 17px Lato, sans-serif; letter-spacing: 1.200px; }
.logo span { margin-top: -2px; }
.company p { margin-top: 11px; line-height: 21px; color: #333; letter-spacing: .08px; }
.social { margin-top: 22px; display: flex; gap: 5px; }
.social i { width: 36px; height: 36px; border-radius: 50%; display: flex; align-items: center; justify-content: center; }
.fb { background: #3b5998; } .tw { background: #0f1419; } .ig { background: #3f729b; }

/* map */
.map { width: 315px; height: 405px; position: relative; overflow: hidden; }
.terrain { width: 315px; height: 405px; }
.place { font-family: "Noto Sans CJK JP", sans-serif; paint-order: stroke; stroke: #fff; stroke-opacity: .85; stroke-width: 6px; font-weight: 500; }
.prefecture { fill: #5f6670; font-size: 30px; }
.city { fill: #222; }
.pin-label { font: 500 37px "Noto Sans CJK JP", sans-serif; fill: #c5221f; paint-order: stroke; stroke: #fff; stroke-opacity: .85; stroke-width: 6px; }
.google { font: 600 40px "Open Sans", sans-serif; paint-order: stroke; stroke: #fff; stroke-width: 3px; }
.map-card { position: absolute; left: 9px; top: 9px; width: 180px; height: 55px; padding: 7px 11px; background: #fff; box-shadow: 0 1px 3px rgba(0,0,0,.3); border-radius: 1px; color: #000; line-height: 20px; font-family: "Noto Sans CJK JP", sans-serif; }
.map-card strong, .map-card a { display: block; font-weight: 400; }
.map-card a { font-size: 11px; line-height: 19px; color: #1a73e8; }
.satellite { position: absolute; left: 9px; top: 359px; width: 36px; height: 36px; border: 1px solid #fff; border-radius: 2px; box-shadow: 0 1px 3px rgba(0,0,0,.4); }
.zoom { position: absolute; left: 270px; top: 311px; width: 36px; height: 72px; background: #fff; border-radius: 2px; box-shadow: 0 1px 3px rgba(0,0,0,.3); }
.map-legal { position: absolute; right: 0; bottom: 0; width: 281px; height: 13px; display: flex; background: #d3e0f6; color: #000; font: 9px/13px "Noto Sans CJK JP", sans-serif; }
.map-legal span { text-align: center; }
.l1 { width: 119px; letter-spacing: .05px; }
.l2 { width: 115px; border-left: 1px solid #9fb4d8; letter-spacing: -.15px; }
.l3 { width: 47px; border-left: 1px solid #9fb4d8; }
.copyright { margin: 76px 340px 0 452px; text-align: center; font-size: 11px; color: #333; line-height: 14px; }
.c2 { margin-top: 12px; letter-spacing: -.05px; }
.copyright a { color: #666; border-bottom: 1px dotted #777; }

/* taskbar */
.taskbar { height: 47px; flex: none; border-top: 1px solid #a9b4c1; background: linear-gradient(90deg, #d3dfe8 0, #d5dbe9 12%, #d4dcec 36%, #cde7f6 50%, #cfe6f5 61%, #d4dcec 72%, #d5d9e8 100%); display: grid; grid-template-columns: 683px 894px 1fr; align-items: start; }
.widget { display: flex; gap: 7px; padding: 10px 0 0 20px; }
.widget span { display: block; font: 12px/17px "Open Sans", "Noto Sans CJK JP", sans-serif; color: #222; }
.widget div { margin-top: -4px; }
.w1 { letter-spacing: -.8px; }
.widget .w2 { color: #c42b1c; font-size: 11.500px; line-height: 15px; }
.apps { display: flex; height: 46px; align-items: center; }
.start { width: 23px; height: 23px; margin-right: 13px; }
.task-search { width: 219px; height: 31px; border-radius: 16px; background: #f3f8fd; border: 1px solid #c4ccd9; display: flex; align-items: center; padding-left: 10px; color: #555; }
.task-search span { margin: -3px 0 0 11px; flex: 1; font: 13.500px "Noto Sans CJK JP", sans-serif; }
.donkey { margin-right: 9px; }
.taskview { width: 24px; height: 24px; margin-left: 13px; }
.teams { width: 30px; height: 28px; margin: 0 14px 6px 20px; }
.edge { width: 24px; height: 24px; }
.files { width: 24px; height: 22px; margin: 0 14px 0 20px; }
.chrome-tile { width: 36px; height: 39px; background: #edf4fb; border: 1px solid #dfe8f2; border-radius: 4px; display: flex; flex-direction: column; align-items: center; padding-top: 7px; gap: 3px; }
.chrome-tile i { width: 16px; height: 3px; border-radius: 2px; background: #0f6fcb; }
.ps { width: 22px; height: 22px; margin: 0 20px 0 15px; border-radius: 4px; background: #001e36; color: #31a8ff; text-align: center; font: bold 12px/22px "Open Sans", sans-serif; }
.localwp { position: relative; }
.localwp i { position: absolute; left: 10px; top: 27px; width: 6px; height: 3px; border-radius: 2px; background: #858b94; }
.tray { display: grid; grid-template-columns: 29px 32px 38px 38px 23px 35px 14px; height: 46px; align-items: center; padding-left: 5px; color: #222; }
.ime { font: 15px/20px "Noto Sans CJK JP", sans-serif; }
.date { font: 11px "Open Sans", sans-serif; padding: 15px 0 0 0; letter-spacing: -1.500px; }
```
